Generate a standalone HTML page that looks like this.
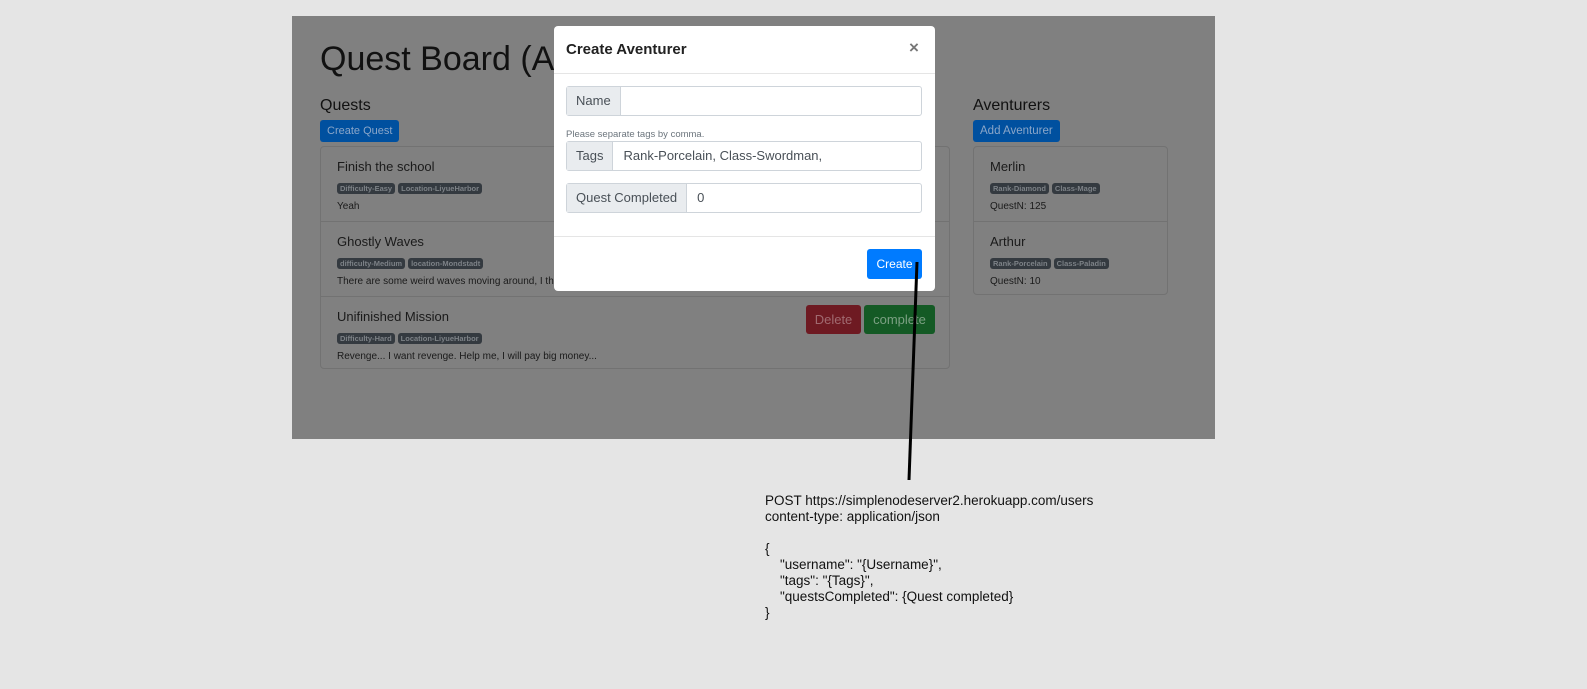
<!DOCTYPE html>
<html><head><meta charset="utf-8"><style>
*{box-sizing:border-box;margin:0;padding:0}
body{width:1587px;height:689px;background:#e5e5e5;position:relative;overflow:hidden;font-family:"Liberation Sans",sans-serif;}
.abs{position:absolute}
#app{left:292px;top:16px;width:923px;height:423px;background:#808080;}
.h1{left:320px;top:40px;font-size:34px;color:#111;}
.h{font-size:16px;color:#111;}
.btnb{background:#00509f;color:#8aa6c9;font-size:11px;border-radius:3px;line-height:22px;padding:0 7px;}
.card{border:1px solid #727272;border-radius:4px;}
.item{position:absolute;left:0;right:0;border-bottom:1px solid #727272;padding:12px 16px;}
.item:last-child{border-bottom:none}
.t{font-size:13px;color:#1a1a1a;}
.tag{display:inline-block;background:#343a40;color:#7d8287;font-size:7.5px;border-radius:3px;padding:1px 3px;margin-right:3px;font-weight:bold}
.d{font-size:10px;color:#1a1a1a;margin-top:7px}
#modal{left:554px;top:26px;width:381px;height:265px;background:#fff;border-radius:4px;}
.ig{position:absolute;left:12px;width:356px;height:30px;border:1px solid #ced4da;border-radius:3px;display:flex;font-size:13px;color:#495057}
.ig .l{background:#e9ecef;border-right:1px solid #ced4da;padding:0 9px;line-height:28px}
.ig .v{padding:0 10px;line-height:28px}
.code{left:765px;top:493px;font-size:13.5px;line-height:16px;color:#111;white-space:pre}
</style></head><body>
<div id="app" class="abs"></div>
<div class="abs h1">Quest Board (Admin)</div>
<div class="abs h" style="left:320px;top:97px">Quests</div>
<div class="abs btnb" style="left:320px;top:120px">Create Quest</div>
<div class="abs card" style="left:320px;top:146px;width:630px;height:223px">
 <div class="item" style="top:0;height:75px"><div class="t">Finish the school</div><div style="margin-top:4px"><span class="tag">Difficulty-Easy</span><span class="tag">Location-LiyueHarbor</span></div><div class="d" style="margin-top:5px">Yeah</div></div>
 <div class="item" style="top:75px;height:75px"><div class="t">Ghostly Waves</div><div style="margin-top:4px"><span class="tag">difficulty-Medium</span><span class="tag">location-Mondstadt</span></div><div class="d" style="margin-top:5px">There are some weird waves moving around, I think</div></div>
 <div class="item" style="top:150px;height:72px"><div class="t">Unifinished Mission</div><div style="margin-top:4px"><span class="tag">Difficulty-Hard</span><span class="tag">Location-LiyueHarbor</span></div><div class="d" style="margin-top:5px">Revenge... I want revenge. Help me, I will pay big money...</div></div>
</div>
<div class="abs" style="left:806px;top:305px;width:55px;height:29px;background:#6e1a22;border-radius:3px;color:#a06a70;font-size:13px;text-align:center;line-height:29px">Delete</div>
<div class="abs" style="left:864px;top:305px;width:71px;height:29px;background:#145a25;border-radius:3px;color:#7ca083;font-size:13px;text-align:center;line-height:29px">complete</div>
<div class="abs h" style="left:973px;top:97px">Aventurers</div>
<div class="abs btnb" style="left:973px;top:120px;font-size:11.5px">Add Aventurer</div>
<div class="abs card" style="left:973px;top:146px;width:195px;height:149px">
 <div class="item" style="top:0;height:75px"><div class="t">Merlin</div><div style="margin-top:4px"><span class="tag">Rank-Diamond</span><span class="tag">Class-Mage</span></div><div class="d" style="margin-top:5px">QuestN: 125</div></div>
 <div class="item" style="top:75px;height:74px"><div class="t">Arthur</div><div style="margin-top:4px"><span class="tag">Rank-Porcelain</span><span class="tag">Class-Paladin</span></div><div class="d" style="margin-top:5px">QuestN: 10</div></div>
</div>
<div id="modal" class="abs">
 <div class="abs" style="left:12px;top:15px;font-size:15px;font-weight:bold;color:#222">Create Aventurer</div>
 <div class="abs" style="left:355px;top:12px;font-size:17px;color:#777;font-weight:bold">×</div>
 <div class="abs" style="left:0;top:47px;width:381px;border-top:1px solid #e5e5e5"></div>
 <div class="ig" style="top:60px"><div class="l">Name</div></div>
 <div class="abs" style="left:12px;top:103px;font-size:9.5px;color:#6c757d">Please separate tags by comma.</div>
 <div class="ig" style="top:115px"><div class="l">Tags</div><div class="v">Rank-Porcelain, Class-Swordman,</div></div>
 <div class="ig" style="top:157px"><div class="l">Quest Completed</div><div class="v">0</div></div>
 <div class="abs" style="left:0;top:210px;width:381px;border-top:1px solid #e5e5e5"></div>
 <div class="abs" style="left:313px;top:223px;width:55px;height:30px;background:#007bff;border-radius:3px;color:#fff;font-size:12px;text-align:center;line-height:30px">Create</div>
</div>
<svg class="abs" style="left:0;top:0" width="1587" height="689"><line x1="917" y1="262" x2="909" y2="480" stroke="#000" stroke-width="3"/></svg>
<div class="abs code">POST https://simplenodeserver2.herokuapp.com/users
content-type: application/json

{
    "username": "{Username}",
    "tags": "{Tags}",
    "questsCompleted": {Quest completed}
}</div>
</body></html>
